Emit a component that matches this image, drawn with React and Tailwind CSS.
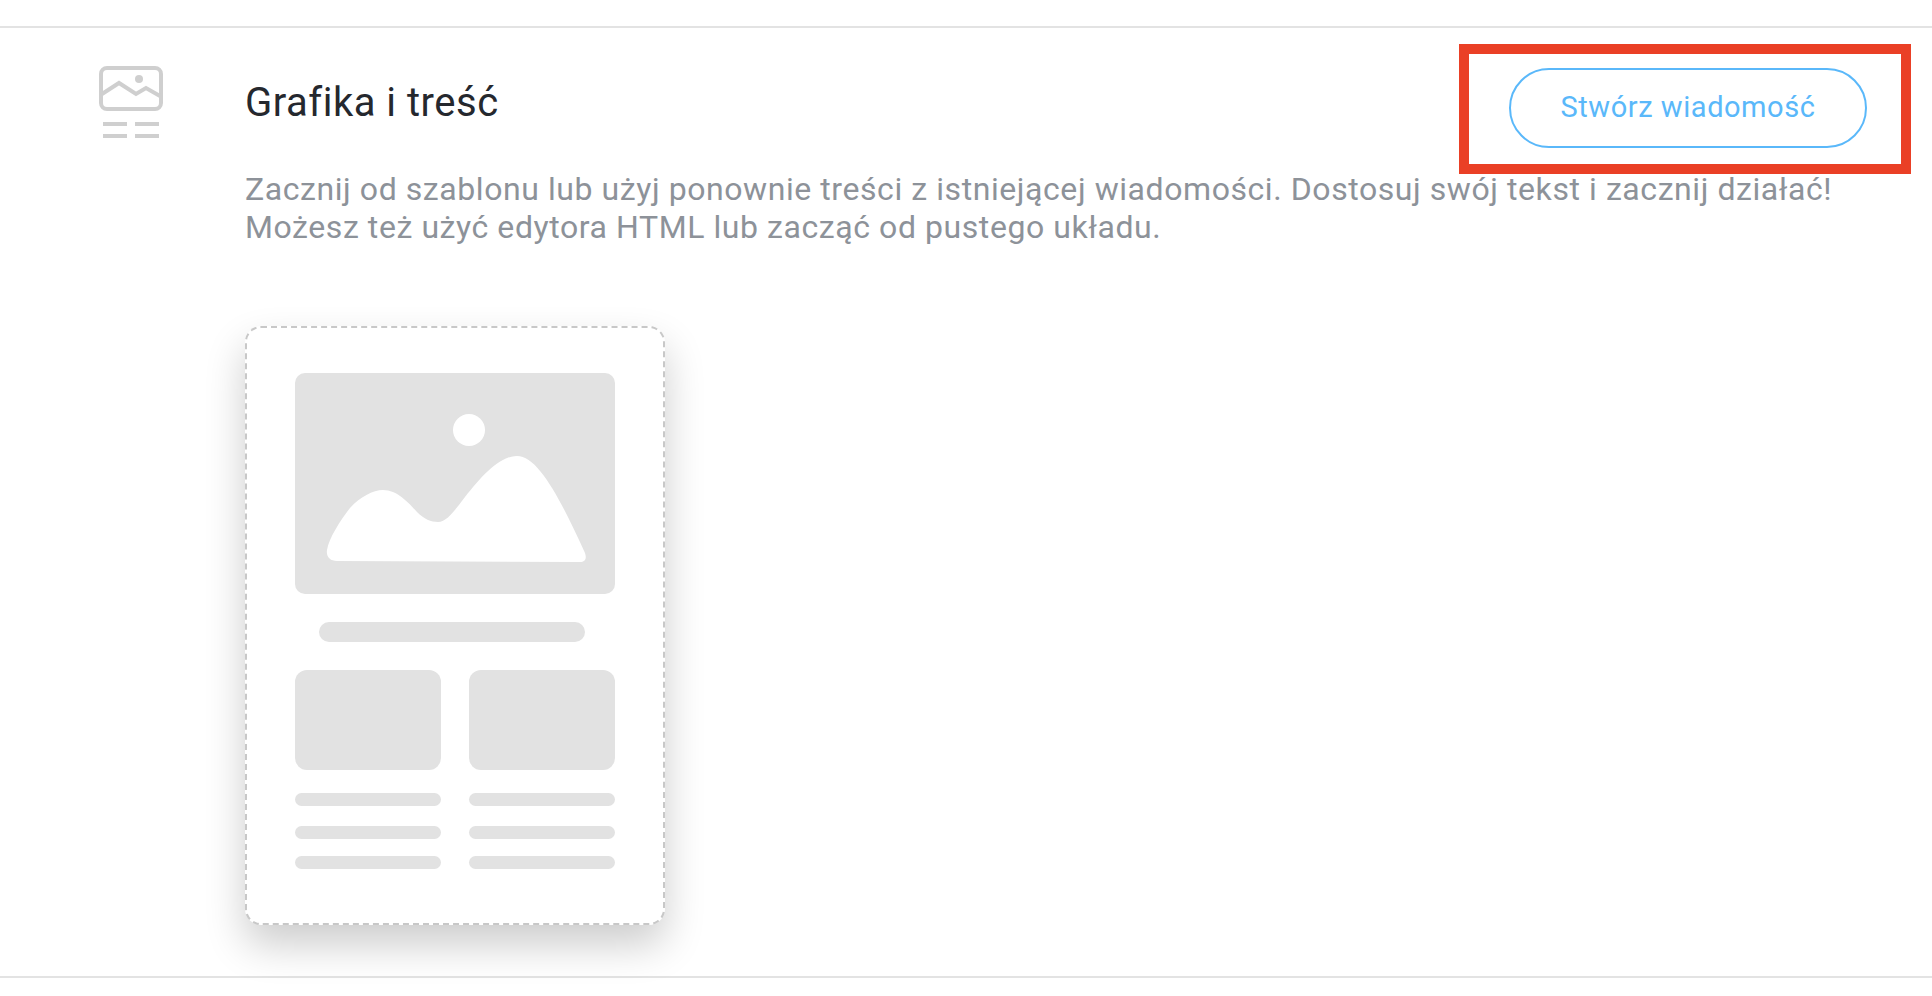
const font = { fontFamily: 'Roboto, sans-serif' };

function ContentIcon() {
    return (
        <svg width="68" height="76" viewBox="0 0 68 76" fill="none">
            <rect x="2" y="2" width="60" height="41" rx="6" stroke="#cfcfcf" strokeWidth="4" />
            <path d="M3 28L20 17L37 28L47 22L61 30" stroke="#cfcfcf" strokeWidth="4" />
            <circle cx="40" cy="13" r="4" fill="#cfcfcf" />
            <path d="M4 58H28M36 58H60M4 70H28M36 70H60" stroke="#cfcfcf" strokeWidth="4" />
        </svg>
    );
}

function TemplateImage() {
    return (
        <div className="h-[221px] rounded-[10px] bg-[#e2e2e2]">
            <svg width="320" height="221" viewBox="0 0 320 221">
                <circle cx="174" cy="57" r="16" fill="#fff" />
                <path
                    d="M32 177C34 165 45 148 55 135C65 124 78 117 88 117C102 117 113 129 122 139C129 146 136 149 143 149C152 149 160 137 170 124C186 104 204 83 222 83C243 83 265 125 290 180C292 186 290 189 285 189L42 188C35 188 31 184 32 177Z"
                    fill="#fff"
                />
            </svg>
        </div>
    );
}

function ColumnLines() {
    return (
        <div className="flex flex-col">
            <div className="h-[100px] rounded-xl bg-[#e2e2e2]" />
            <div className="mt-[23px] h-[13px] rounded-full bg-[#e2e2e2]" />
            <div className="mt-[20px] h-[13px] rounded-full bg-[#e2e2e2]" />
            <div className="mt-[17px] h-[13px] rounded-full bg-[#e2e2e2]" />
        </div>
    );
}

export default function App() {
    return (
        <div className="h-[996px] bg-white pt-[26px]" style={font}>
            <section className="flex h-[952px] border-y-2 border-[#e3e3e3] pl-[99px] pr-[21px]">
                <div className="w-[146px] shrink-0 pt-[38px]">
                    <ContentIcon />
                </div>
                <div className="min-w-0 flex-1">
                    <div className="flex items-start justify-between pt-[16px]">
                        <h2 className="mt-[35px] text-[40px] leading-[48px] font-normal tracking-[0.5px] text-[#25282e]">Grafika i treść</h2>
                        <div className="h-[130px] w-[452px] border-[10px] border-[#ea4026] pt-[14px] pl-[40px]">
                            <button className="h-[80px] w-[358px] rounded-full border-2 border-[#5ab8fa] text-[29px] tracking-[0.55px] text-[#5ab8fa]">
                                Stwórz wiadomość
                            </button>
                        </div>
                    </div>
                    <p className="-mt-[4px] text-[32px] leading-[38px] tracking-[0.57px] text-[#8d9299]">
                        Zacznij od szablonu lub użyj ponownie treści z istniejącej wiadomości. Dostosuj swój tekst i zacznij działać!
                        <br />
                        Możesz też użyć edytora HTML lub zacząć od pustego układu.
                    </p>
                    <div className="mt-[80px] h-[599px] w-[420px] rounded-[16px] border-2 border-dashed border-[#c8c8c8] bg-white px-[48px] pt-[45px] shadow-[0_20px_40px_rgba(0,0,0,0.2)]">
                        <div className="blur-[0.5px]">
                            <TemplateImage />
                            <div className="mt-[28px] ml-[24px] h-[20px] w-[266px] rounded-full bg-[#e2e2e2]" />
                            <div className="mt-[28px] grid grid-cols-2 gap-x-[28px]">
                                <ColumnLines />
                                <ColumnLines />
                            </div>
                        </div>
                    </div>
                </div>
            </section>
        </div>
    );
}
